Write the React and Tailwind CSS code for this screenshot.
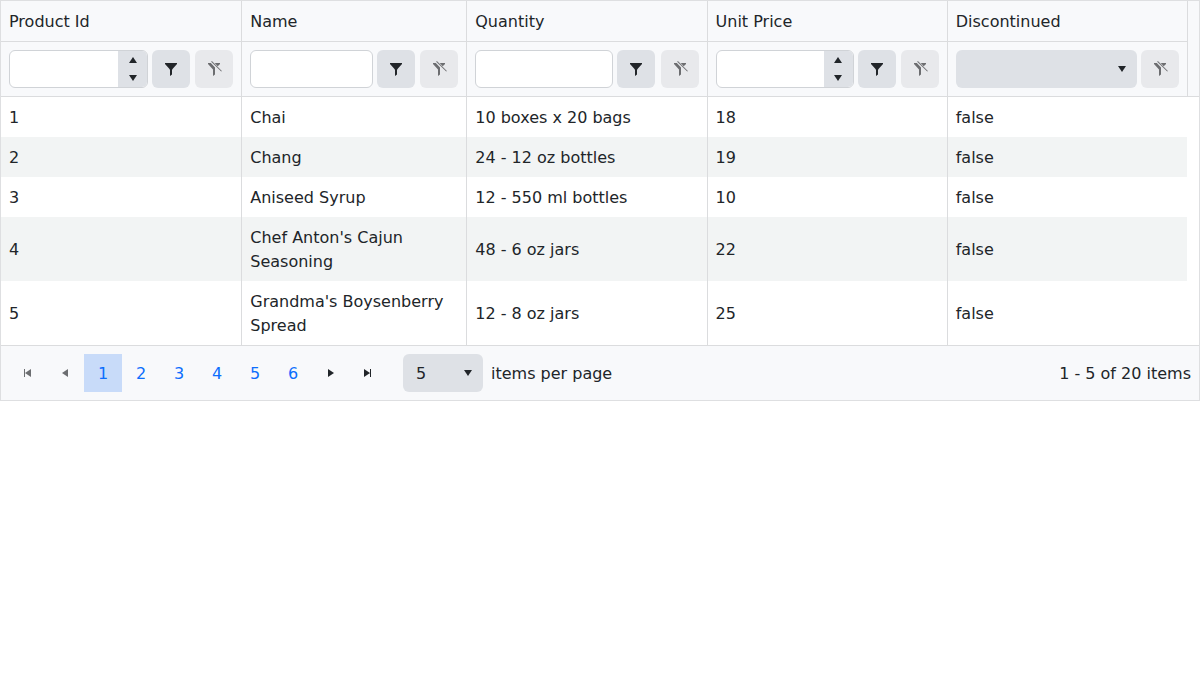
import React from "react";

const PATHS = {
  up: "M256 160 128 352h256z",
  down: "M256 352 128 160h256z",
  filter: "M64 64v32l144 160 16 32v192l64-48V288l16-32L448 96V64z",
  first: "M160 128h32v256h-32zM192 256l192-128v256z",
  prev: "M160 256l192-128v256z",
  next: "M352 256 160 128v256z",
  last: "M288 128h32v256h-32zM288 256 96 128v256z",
};

function Icon({ name, className = "" }) {
  return (
    <svg viewBox="0 0 512 512" className={`block size-4 shrink-0 fill-current ${className}`}>
      <path d={PATHS[name]} />
    </svg>
  );
}

function ClearIcon() {
  return (
    <svg viewBox="0 0 16 16" className="block size-4 fill-current">
      <path d="M2 2H4.8L9 6.4V13.5L7 15V8.6L2 3z" />
      <path d="M8.7 2H14V3L11.7 5.2z" />
      <path d="M5.2 .7 5.9 0 15.9 9.9 15.2 10.6z" />
    </svg>
  );
}

const box = "flex h-[38px] shrink-0 rounded-md";

function FilterButton() {
  return (
    <button className={`${box} ml-1 w-[38px] items-center justify-center bg-[#dee1e6]`}>
      <Icon name="filter" />
    </button>
  );
}

function ClearButton() {
  return (
    <button disabled className={`${box} ml-auto w-[38px] items-center justify-center bg-[#e8e9ec] text-[#6c6d70]`}>
      <ClearIcon />
    </button>
  );
}

function NumberInput({ className }) {
  return (
    <div className={`${box} overflow-hidden border border-[#d0d3d7] bg-white ${className}`}>
      <div className="flex-1" />
      <div className="flex w-[29px] flex-col items-center justify-between bg-[#dee1e6] py-px">
        <Icon name="up" />
        <Icon name="down" />
      </div>
    </div>
  );
}

function TextInput({ className }) {
  return <div className={`${box} border border-[#d0d3d7] bg-white ${className}`} />;
}

const COLS = "grid grid-cols-[241.25px_225px_240.3px_240.2px_240.25px_11px]";
const HEADERS = ["Product Id", "Name", "Quantity", "Unit Price", "Discontinued"];
const ROWS = [
  ["1", "Chai", "10 boxes x 20 bags", "18", "false"],
  ["2", "Chang", "24 - 12 oz bottles", "19", "false"],
  ["3", "Aniseed Syrup", "12 - 550 ml bottles", "10", "false"],
  ["4", "Chef Anton's Cajun Seasoning", "48 - 6 oz jars", "22", "false"],
  ["5", "Grandma's Boysenberry Spread", "12 - 8 oz jars", "25", "false"],
];
const filterCell = "flex h-[55px] border-r border-b border-[#dbdcde] py-2 pl-2 pr-2";
const pageBtn = "flex size-[38px] items-center justify-center";

export default function App() {
  return (
    <div className="w-[1200px] border border-[#dedfe1] bg-white font-['DejaVu_Sans',sans-serif] text-base leading-6 text-[#212529]">
      <div className={`${COLS} bg-[#f8f9fb]`}>
        {HEADERS.map((h) => (
          <div key={h} className="h-[41px] border-r border-b border-[#dbdcde] px-2 pt-[9px]">{h}</div>
        ))}
        <div />
        <div className={filterCell}>
          <NumberInput className="w-[139px]" />
          <FilterButton />
          <ClearButton />
        </div>
        <div className={filterCell}>
          <TextInput className="w-[123px]" />
          <FilterButton />
          <ClearButton />
        </div>
        <div className={filterCell}>
          <TextInput className="w-[138px]" />
          <FilterButton />
          <ClearButton />
        </div>
        <div className={filterCell}>
          <NumberInput className="w-[138.4px]" />
          <FilterButton />
          <ClearButton />
        </div>
        <div className={filterCell}>
          <div className={`${box} w-[181px] items-center justify-end bg-[#dee1e6] pr-[7px]`}>
            <Icon name="down" />
          </div>
          <ClearButton />
        </div>
        <div className="border-b border-[#dbdcde]" />
      </div>

      {ROWS.map((row, r) => (
        <div key={row[0]} className={COLS}>
          {row.map((text, c) => (
            <div
              key={c}
              className={`flex items-center border-r px-2 pt-[9px] pb-[7px] ${c === 4 ? "border-white" : "border-[#dbdcde]"} ${r % 2 ? "bg-[#f2f4f4]" : "bg-white"}`}
            >
              {text}
            </div>
          ))}
        </div>
      ))}

      <div className="flex h-[55px] items-center border-t border-[#dbdcde] bg-[#f8f9fb] pl-[7px] pr-2">
        <button disabled className={`${pageBtn} text-[#6c6e71]`}><Icon name="first" /></button>
        <button disabled className={`${pageBtn} text-[#6c6e71]`}><Icon name="prev" /></button>
        {[1, 2, 3, 4, 5, 6].map((n) => (
          <button key={n} className={`${pageBtn} pt-0.5 text-[#0d6efd] ${n === 1 ? "bg-[#c8dbf9]" : ""}`}>{n}</button>
        ))}
        <button className={pageBtn}><Icon name="next" /></button>
        <button className={pageBtn}><Icon name="last" /></button>
        <div className={`${box} ml-[15px] w-20 items-center justify-between bg-[#dee1e6] pl-[13px] pr-[7px]`}>
          <span className="pt-0.5">5</span>
          <Icon name="down" />
        </div>
        <span className="ml-2 pt-0.5">items per page</span>
        <span className="ml-auto pt-0.5">1 - 5 of 20 items</span>
      </div>
    </div>
  );
}
